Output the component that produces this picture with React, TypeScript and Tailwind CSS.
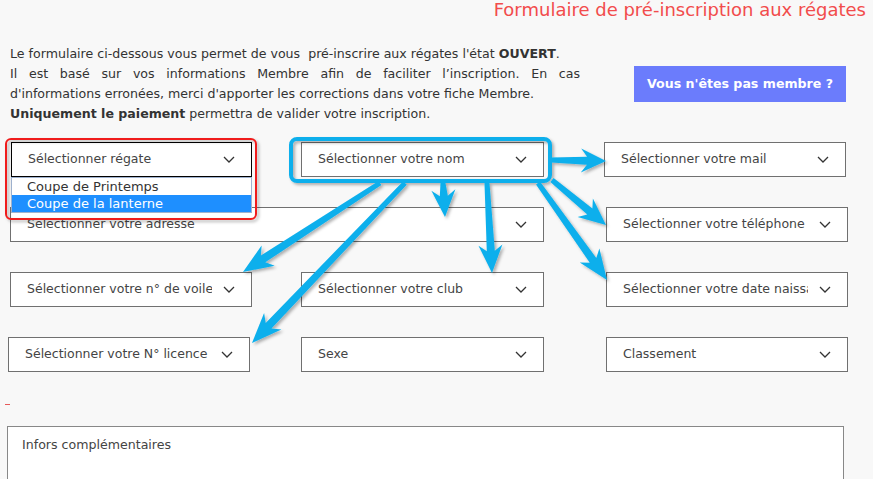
import React from "react";

type Pt = [number, number];

function arrowPoints(s: Pt, t: Pt, w0 = 2, w1 = 3.5, headLen = 27, headW = 12, notch = 6): string {
  const dx = t[0] - s[0];
  const dy = t[1] - s[1];
  const len = Math.hypot(dx, dy);
  const ux = dx / len;
  const uy = dy / len;
  const nx = -uy;
  const ny = ux;
  const at = (back: number, side: number): Pt => [t[0] - ux * back + nx * side, t[1] - uy * back + ny * side];
  const pts: Pt[] = [
    [s[0] + nx * w0, s[1] + ny * w0],
    at(headLen - notch, w1),
    at(headLen, headW),
    [t[0], t[1]],
    at(headLen, -headW),
    at(headLen - notch, -w1),
    [s[0] - nx * w0, s[1] - ny * w0],
  ];
  return pts.map((p) => `${p[0].toFixed(1)},${p[1].toFixed(1)}`).join(" ");
}

const arrows: { from: Pt; to: Pt; head?: number }[] = [
  { from: [551, 160], to: [606, 161], head: 25 },
  { from: [552, 180], to: [606, 225] },
  { from: [538, 183], to: [607, 280], head: 30 },
  { from: [487, 183], to: [492, 273], head: 28 },
  { from: [443, 183], to: [445, 217], head: 27 },
  { from: [380, 183], to: [243, 272], head: 30 },
  { from: [405, 183], to: [252, 343], head: 30 },
];

function Chevron() {
  return (
    <svg width="12" height="7" viewBox="0 0 12 7" className="shrink-0">
      <polyline points="1,1 6,6 11,1" fill="none" stroke="#333" strokeWidth="1.3" />
    </svg>
  );
}

function SelectBox({
  label,
  className = "",
  dark = false,
  children,
}: {
  label: string;
  className?: string;
  dark?: boolean;
  children?: React.ReactNode;
}) {
  return (
    <div
      className={`relative h-[35px] bg-white border flex items-center pl-[16px] pr-[16px] ${
        dark ? "border-black" : "border-[#707070]"
      } ${className}`}
    >
      <span className="flex-1 overflow-hidden whitespace-nowrap text-[12.5px] text-[#444] mr-[11px]">{label}</span>
      <Chevron />
      {children}
    </div>
  );
}

export default function App() {
  return (
    <div className="relative w-[873px] h-[479px] overflow-hidden bg-[#f8f8f8] font-['DejaVu_Sans',sans-serif]">
      {/* Title */}
      <div className="h-[20px] text-right pr-[7px] text-[18px] leading-[20px] text-[#f24c4c]">
        Formulaire de pré-inscription aux régates
      </div>

      {/* Intro */}
      <div className="flex mt-[24px]">
        <p className="ml-[10px] w-[570px] shrink-0 text-[12.6px] leading-[20px] text-[#333] text-justify">
          Le formulaire ci-dessous vous permet de vous&nbsp; pré-inscrire aux régates l'état <b>OUVERT</b>.
          <br />
          Il est basé sur vos informations Membre afin de faciliter l’inscription. En cas d'informations erronées,
          merci d'apporter les corrections dans votre fiche Membre.
          <br />
          <b>Uniquement le paiement</b> permettra de valider votre inscription.
        </p>
        <button className="ml-[54px] mt-[22px] w-[212px] h-[36px] shrink-0 bg-[#6b7cfc] text-white font-bold text-[12.6px]">
          Vous n'êtes pas membre ?
        </button>
      </div>

      {/* Selects */}
      <div className="flex flex-col gap-[30px] mt-[18px]">
        <div className="flex">
          <SelectBox label="Sélectionner régate" dark className="ml-[11px] w-[241px]">
            <div className="absolute left-[-1px] right-[-1px] top-[34px] h-[36px] bg-white border border-[#9fb2cf] z-10 text-[13px] leading-[17px] text-[#333]">
              <div className="pl-[15px] h-[17px]">Coupe de Printemps</div>
              <div className="pl-[15px] h-[17px] bg-[#1e8fff] text-white">Coupe de la lanterne</div>
            </div>
          </SelectBox>
          <SelectBox label="Sélectionner votre nom" className="ml-[49px] w-[243px]" />
          <SelectBox label="Sélectionner votre mail" className="ml-[60px] w-[242px]" />
        </div>
        <div className="flex">
          <SelectBox label="Sélectionner votre adresse" className="ml-[10px] w-[534px]" />
          <SelectBox label="Sélectionner votre téléphone" className="ml-[62px] w-[242px]" />
        </div>
        <div className="flex">
          <SelectBox label="Sélectionner votre n° de voile" className="ml-[10px] w-[242px]" />
          <SelectBox label="Sélectionner votre club" className="ml-[49px] w-[243px]" />
          <SelectBox label="Sélectionner votre date naissance" className="ml-[62px] w-[242px]" />
        </div>
        <div className="flex">
          <SelectBox label="Sélectionner votre N° licence" className="ml-[8px] w-[242px]" />
          <SelectBox label="Sexe" className="ml-[51px] w-[243px]" />
          <SelectBox label="Classement" className="ml-[62px] w-[242px]" />
        </div>
      </div>

      <div className="ml-[5px] mt-[32px] w-[5px] h-px bg-[#e65a5a]" />

      <div className="ml-[7px] mt-[21px] w-[837px] h-[80px] bg-white border border-[#888] pl-[14px] pt-[9px] text-[12.6px] text-[#444]">
        Infors complémentaires
      </div>

      {/* Annotation layer */}
      <svg className="absolute inset-0 pointer-events-none z-20" width="873" height="479">
        <defs>
          <filter id="sh" x="-20%" y="-20%" width="140%" height="140%">
            <feDropShadow dx="2" dy="2" stdDeviation="1.5" floodColor="#000" floodOpacity="0.3" />
          </filter>
        </defs>
        <rect x="6" y="139" width="250" height="80" rx="5" fill="none" stroke="#f01c1c" strokeWidth="2" filter="url(#sh)" />
        <g fill="#0bafec" filter="url(#sh)">
          {arrows.map((a, i) => (
            <polygon key={i} points={arrowPoints(a.from, a.to, 2.5, 4, a.head ?? 27, 12, 6)} />
          ))}
          <rect x="291" y="139" width="259" height="42" rx="6" fill="none" stroke="#0bafec" strokeWidth="4" />
        </g>
      </svg>
    </div>
  );
}
